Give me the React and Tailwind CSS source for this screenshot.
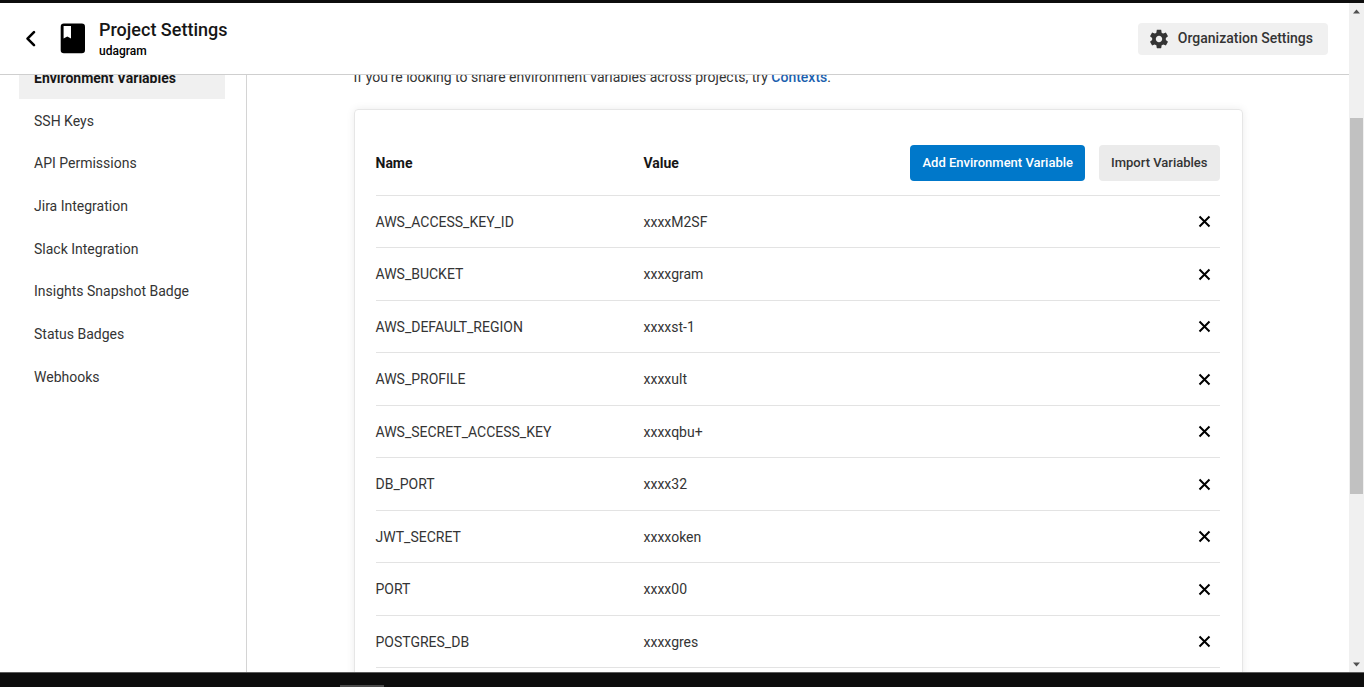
const navItems = [
  "Environment Variables",
  "SSH Keys",
  "API Permissions",
  "Jira Integration",
  "Slack Integration",
  "Insights Snapshot Badge",
  "Status Badges",
  "Webhooks",
];

const variables = [
  ["AWS_ACCESS_KEY_ID", "xxxxM2SF"],
  ["AWS_BUCKET", "xxxxgram"],
  ["AWS_DEFAULT_REGION", "xxxxst-1"],
  ["AWS_PROFILE", "xxxxult"],
  ["AWS_SECRET_ACCESS_KEY", "xxxxqbu+"],
  ["DB_PORT", "xxxx32"],
  ["JWT_SECRET", "xxxxoken"],
  ["PORT", "xxxx00"],
  ["POSTGRES_DB", "xxxxgres"],
];

function GearIcon() {
  return (
    <svg width="22" height="22" viewBox="0 0 24 24" fill="currentColor" aria-hidden="true">
      <path d="M19.43 12.98c.04-.32.07-.64.07-.98s-.03-.66-.07-.98l2.11-1.65c.19-.15.24-.42.12-.64l-2-3.46c-.12-.22-.39-.3-.61-.22l-2.49 1c-.52-.4-1.08-.73-1.69-.98l-.38-2.65C14.46 2.18 14.25 2 14 2h-4c-.25 0-.46.18-.49.42l-.38 2.65c-.61.25-1.17.59-1.69.98l-2.49-1c-.23-.09-.49 0-.61.22l-2 3.46c-.13.22-.07.49.12.64l2.11 1.65c-.04.32-.07.65-.07.98s.03.66.07.98l-2.11 1.65c-.19.15-.24.42-.12.64l2 3.46c.12.22.39.3.61.22l2.49-1c.52.4 1.08.73 1.69.98l.38 2.65c.03.24.24.42.49.42h4c.25 0 .46-.18.49-.42l.38-2.65c.61-.25 1.17-.59 1.69-.98l2.49 1c.23.09.49 0 .61-.22l2-3.46c.12-.22.07-.49-.12-.64l-2.11-1.65zM12 15.5c-1.93 0-3.5-1.57-3.5-3.5s1.57-3.5 3.5-3.5 3.5 1.57 3.5 3.5-1.57 3.5-3.5 3.5z" />
    </svg>
  );
}

function Header() {
  return (
    <header className="flex h-[72px] shrink-0 items-center justify-between border-b border-[#cfcfcf] bg-white pr-[21px] pl-6">
      <div className="flex items-center">
        <button type="button" aria-label="Back" className="flex w-9 items-center">
          <svg width="14" height="18" viewBox="0 0 14 18" fill="none" stroke="#000" strokeWidth="2.6" strokeLinecap="round" strokeLinejoin="round">
            <path d="M10 2.2 3.5 8.7 10 15.2" />
          </svg>
        </button>
        <svg width="26" height="31" viewBox="0 0 26 31" aria-hidden="true">
          <rect x="0.7" y="0.5" width="24.3" height="29.8" rx="3.2" fill="#000" />
          <path d="M3.6 3H11V15.6L7.3 13.6 3.6 15.6Z" fill="#fff" />
        </svg>
        <div className="ml-[13px] pt-0.5">
          <h1 className="text-[18px] leading-[22px] font-medium text-[#161616]">Project Settings</h1>
          <p className="text-[12px] leading-5 font-medium text-black">udagram</p>
        </div>
      </div>
      <button type="button" className="flex h-8 items-center gap-2 rounded bg-[#f0f0f0] pr-[15px] pl-[10px] text-[14px] font-medium text-[#343434]">
        <GearIcon />
        Organization Settings
      </button>
    </header>
  );
}

function Sidebar() {
  return (
    <nav className="w-[247px] shrink-0 border-r border-[#d4d4d4] pr-[21px] pl-[19px]">
      <ul className="-mt-[19px]">
        {navItems.map((item, i) => (
          <li key={item} className="h-[43px] nth-[3n]:h-[42px]">
            <a
              href="#"
              className={
                i === 0
                  ? "flex h-full items-center bg-[#f0f0f0] pt-px pl-[15px] text-[14px] font-bold text-[#161616]"
                  : "flex h-full items-center pt-px pl-[15px] text-[14px] text-[#343434]"
              }
            >
              {item}
            </a>
          </li>
        ))}
      </ul>
    </nav>
  );
}

function VariablesTable() {
  return (
    <table className="w-full table-fixed border-collapse text-left text-[14px] text-[#343434]">
      <thead>
        <tr className="h-16 border-b border-[#e3e3e3] text-[#161616]">
          <th className="w-[268px] p-0 pt-0.5 font-bold">Name</th>
          <th className="w-[268px] p-0 pt-0.5 font-bold">Value</th>
          <th className="p-0">
            <div className="flex justify-end gap-[14px]">
              <button type="button" className="h-9 rounded bg-[#0078ca] px-3 text-[13px] font-medium whitespace-nowrap text-white">
                Add Environment Variable
              </button>
              <button type="button" className="h-9 rounded bg-[#ebebeb] px-3 text-[13px] font-medium whitespace-nowrap text-[#343434]">
                Import Variables
              </button>
            </div>
          </th>
        </tr>
      </thead>
      <tbody>
        {variables.map(([name, value]) => (
          <tr key={name} className="border-b border-[#e3e3e3] odd:h-[52px] even:h-[53px]">
            <td className="p-0 pt-0.5">{name}</td>
            <td className="p-0 pt-0.5">{value}</td>
            <td className="p-0 pt-px pr-[9px]">
              <button type="button" aria-label={`Delete ${name}`} className="ml-auto block">
                <svg width="13" height="13" viewBox="0 0 13 13" stroke="#000" strokeWidth="2">
                  <path d="M1.5 1.5 11.5 11.5M11.5 1.5 1.5 11.5" />
                </svg>
              </button>
            </td>
          </tr>
        ))}
      </tbody>
    </table>
  );
}

function Scrollbar() {
  return (
    <div aria-hidden="true" className="flex w-[15px] shrink-0 flex-col items-center bg-[#f0f0f0]">
      <svg width="15" height="17" viewBox="0 0 15 17" fill="#505050">
        <path d="M4 10.5 7.5 6.5 11 10.5Z" />
      </svg>
      <div className="grow-[98]" />
      <div className="w-[13px] grow-[376] bg-[#c1c1c1]" />
      <div className="grow-[161]" />
      <svg width="15" height="17" viewBox="0 0 15 17" fill="#505050">
        <path d="M4 7.5 7.5 11.5 11 7.5Z" />
      </svg>
    </div>
  );
}

export default function App() {
  return (
    <div className="flex h-screen flex-col overflow-hidden bg-white font-[Roboto,sans-serif]">
      <div className="h-[3px] shrink-0 bg-[#0d0d0d]" />
      <div className="flex min-h-0 flex-1">
        <div className="flex min-w-0 flex-1 flex-col">
          <Header />
          <div className="flex min-h-0 flex-1 overflow-hidden">
            <Sidebar />
            <main className="min-w-0 flex-1 px-6">
              <div className="mx-auto -mt-2 max-w-[889px]">
                <p className="text-[14px] leading-5 text-[#343434]">
                  If you’re looking to share environment variables across projects, try{" "}
                  <a href="#" className="font-medium text-[#1c5fae]">Contexts</a>.
                </p>
                <section className="mt-[22px] rounded border border-[#e6e6e6] pt-[21px] pr-[22px] pb-6 pl-[21px] shadow-[0_0_8px_rgba(0,0,0,0.08)]">
                  <VariablesTable />
                </section>
              </div>
            </main>
          </div>
        </div>
        <Scrollbar />
      </div>
      <div className="flex h-[15px] shrink-0 items-end border-t border-[#5c5c5c] bg-[#0d0d0d] pl-[340px]">
        <div className="h-0.5 w-11 bg-[#4a4a4a]" />
      </div>
    </div>
  );
}
